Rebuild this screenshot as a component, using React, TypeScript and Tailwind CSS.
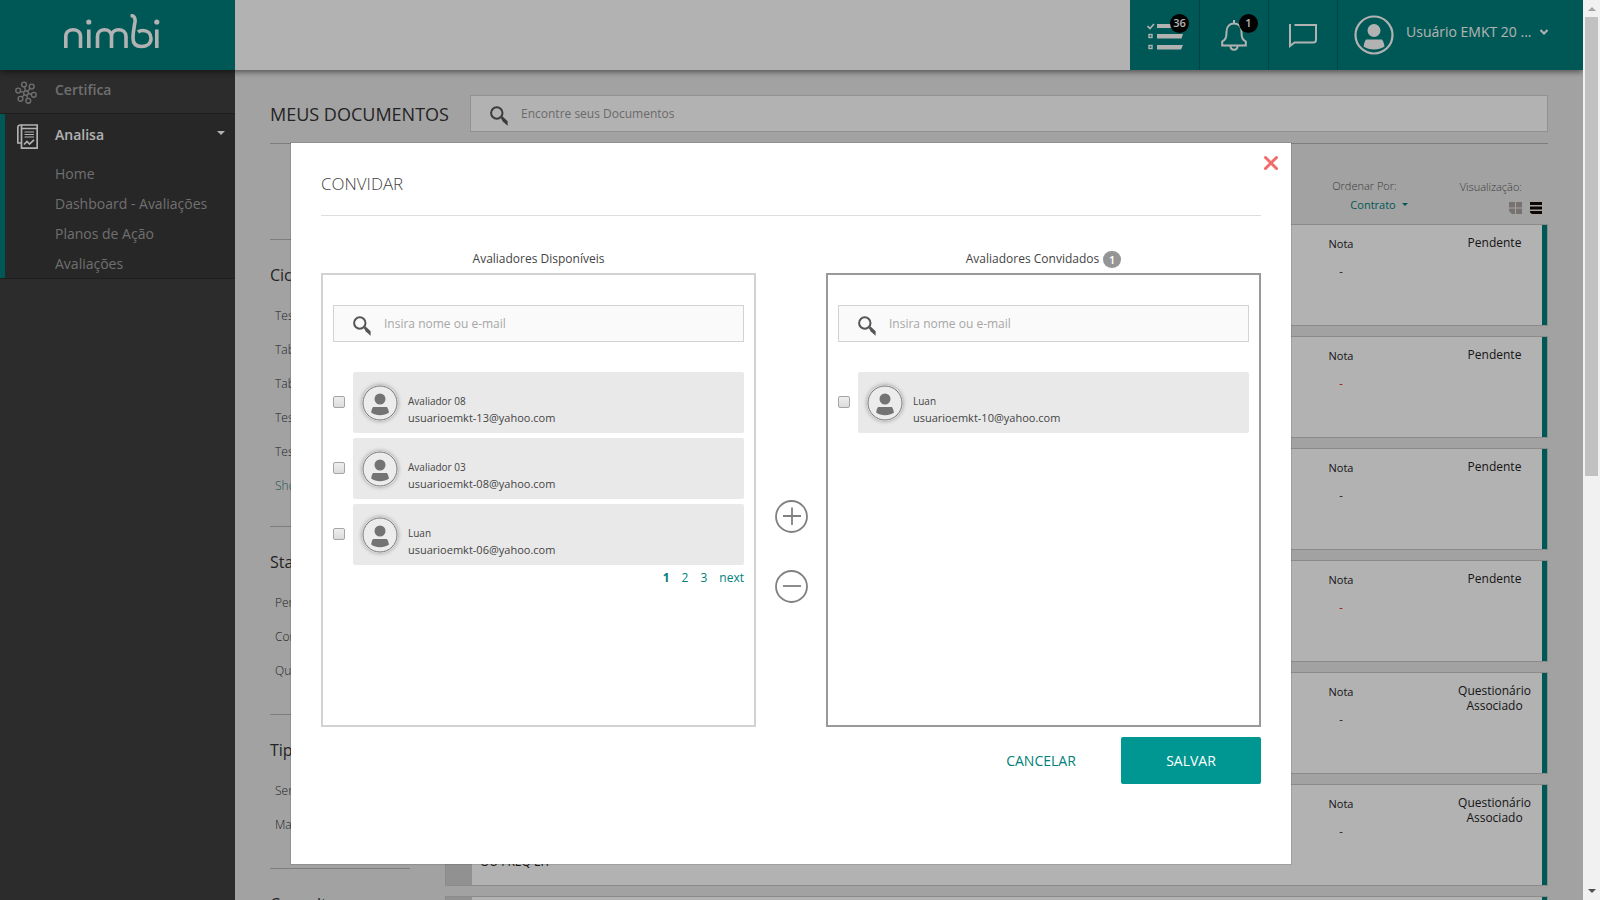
import React, { useState } from 'react';

interface Reviewer {
  id: string;
  name: string;
  email: string;
}

interface FilterGroup {
  title: string;
  items: string[];
  gap: string;
}

interface DocumentRow {
  id: number;
  status: string;
  late?: boolean;
  supplier?: string;
}

const subMenu = ['Home', 'Dashboard - Avaliações', 'Planos de Ação', 'Avaliações'];

const filters: FilterGroup[] = [
  { title: 'Ciclo', items: ['Teste', 'Tabela 1', 'Tabela 2', 'Teste 2', 'Teste 3', 'Show more'], gap: 'h-[287px]' },
  { title: 'Status', items: ['Pendente', 'Concluído', 'Questionário'], gap: 'h-[188px]' },
  { title: 'Tipo', items: ['Serviço', 'Material'], gap: 'h-[154px]' },
  { title: 'Consulta', items: [], gap: 'h-[90px]' },
];

const documents: DocumentRow[] = [
  { id: 1, status: 'Pendente' },
  { id: 2, status: 'Pendente', late: true },
  { id: 3, status: 'Pendente' },
  { id: 4, status: 'Pendente', late: true },
  { id: 5, status: 'Questionário Associado' },
  { id: 6, status: 'Questionário Associado', supplier: 'OU FREQ EIT' },
];

const available: Reviewer[] = [
  { id: 'a13', name: 'Avaliador 08', email: 'usuarioemkt-13@yahoo.com' },
  { id: 'a08', name: 'Avaliador 03', email: 'usuarioemkt-08@yahoo.com' },
  { id: 'a06', name: 'Luan', email: 'usuarioemkt-06@yahoo.com' },
];

const invited: Reviewer[] = [{ id: 'i10', name: 'Luan', email: 'usuarioemkt-10@yahoo.com' }];

const NimbiLogo = () => (
  <svg className="w-24 h-9" viewBox="0 0 96 36" fill="none" stroke="#fff" strokeWidth="3.6" role="img" aria-label="nimbi">
    <path d="M1.8 34V22.500C1.800 13.500 16.500 13.500 16.500 22.500V34" />
    <path d="M24.800 15.500V34M92.800 15.500V34" />
    <path d="M33.500 34V22.500C33.500 13.500 47.500 13.500 47.500 22.500V34M47.500 22.500C47.500 13.500 62 13.500 62 22.500V34" />
    <path d="M66.500 1.500C70 1.500 71.500 4 71 8C70 14 69 18 69 24C69 30 72.500 32.500 77.500 32.500C83 32.500 87 29.500 87 24.500C87 19.500 83.500 16.500 79 16.500C76.500 16.500 75 17.200 74 18" />
    <circle cx="24.800" cy="8" r="2.600" fill="#fff" stroke="none" />
    <circle cx="92.800" cy="8" r="2.600" fill="#fff" stroke="none" />
  </svg>
);

const MoleculeIcon = () => (
  <svg className="w-[22px] h-[23px]" viewBox="0 0 22 23" fill="none" stroke="currentColor" strokeWidth="1.4">
    <circle cx="11" cy="12" r="2.300" />
    <circle cx="9" cy="3.500" r="2.400" />
    <circle cx="16.700" cy="5.500" r="2.400" />
    <circle cx="3.200" cy="9.500" r="2.400" />
    <circle cx="18.800" cy="13.800" r="2.400" />
    <circle cx="5.500" cy="17.800" r="2.400" />
    <circle cx="13.300" cy="19.800" r="2.400" />
    <path d="M10.500 9.800L9.500 6M12.600 10.200L15.200 7.400M8.700 11.300L5.500 10.300M13.300 12.500L16.400 13.300M9.300 13.600L7.200 16M11.700 14.200L12.600 17.400" />
  </svg>
);

const ReportIcon = () => (
  <svg className="w-[21px] h-[25px]" viewBox="0 0 21 25" fill="none" stroke="currentColor" strokeWidth="1.7">
    <path d="M4.500 4.500V24.200H20.200V1H3C1.500 1 .8 2 .8 3.500V19H4.500M4.500 4.500H20M4.500 4.500V1" />
    <path d="M7.500 8H17M7.500 10.500H17M7.500 13H17" strokeWidth="1.200" />
    <path d="M7 20.500L10 17.500L12.500 20L17 15.800" />
  </svg>
);

const TasksIcon = () => (
  <svg className="w-9 h-7" viewBox="0 0 36 28" fill="none" stroke="#fff">
    <path d="M.5 3L3 5.500L7 1" strokeWidth="1.600" />
    <rect x="2" y="11.500" width="3" height="3" strokeWidth="1.400" />
    <rect x="2" y="22.500" width="3" height="3" strokeWidth="1.400" />
    <path fill="#fff" stroke="none" d="M10 1H36L34.800 5H10ZM10 11H36L34.500 15.500H10ZM10 22H36L34 26.500H10Z" />
  </svg>
);

const BellIcon = () => (
  <svg className="w-[26px] h-[31px]" viewBox="0 0 26 31" fill="none" stroke="#fff" strokeWidth="2">
    <path d="M13 0V3.500M13 3.500C8 3.500 5.500 7.500 5.500 12C5.500 18 4.500 19.500 1.200 21.500V25.500H24.800V21.500C21.500 19.500 20.500 18 20.500 12C20.500 7.500 18 3.500 13 3.500Z" />
    <path d="M9.500 26C9.500 31 16.500 31 16.500 26" />
  </svg>
);

const ChatIcon = () => (
  <svg className="w-7 h-6" viewBox="0 0 28 24" fill="none" stroke="#fff" strokeWidth="2">
    <path d="M1 0V22L5.500 18.500H24C26 18.500 27 17.500 27 16V1H5.500" />
  </svg>
);

const UserIcon = () => (
  <svg className="w-10 h-10" viewBox="0 0 40 40">
    <circle cx="20" cy="20" r="18.500" fill="none" stroke="#fff" strokeWidth="2.200" />
    <circle cx="20" cy="15.500" r="6.500" fill="#fff" />
    <path fill="#fff" d="M12 24.500H28C29.500 26.500 30.200 29 30.500 31.500C25 35.500 15 35.500 9.500 31.500C10 29 10.500 26.500 12 24.500Z" />
  </svg>
);

const SearchIcon = () => (
  <svg className="w-[18px] h-5 shrink-0" viewBox="0 0 18 20" fill="none" stroke="#555">
    <circle cx="6.800" cy="7" r="5.700" strokeWidth="2" />
    <path fill="#555" stroke="none" d="M10.800 12L12.600 10.600L17.600 15.200V19.800L12.800 15.600Z" />
  </svg>
);

const Avatar = () => (
  <svg className="w-9 h-9 shrink-0 rounded-full shadow-[0_0_4px_rgba(0,0,0,0.35)]" viewBox="0 0 36 36">
    <circle cx="18" cy="18" r="17" fill="#ececec" stroke="#777" strokeWidth="1" />
    <circle cx="18" cy="14" r="5.500" fill="#737373" />
    <path fill="#737373" d="M11 22H25C26 23.500 26.500 25.500 27 27.500C22 31 14 31 9.200 27.500C9.500 25.500 10 23.500 11 22Z" />
  </svg>
);

const SearchField = ({ label, id }: { label: string; id: string }) => (
  <label htmlFor={id} className="flex items-center h-[37px] pl-[19px] border border-[#d3d3d3] bg-[#fafafa]">
    <span className="pt-1"><SearchIcon /></span>
    <input id={id} type="text" placeholder={label} aria-label={label} className="flex-1 ml-[13px] min-w-0 h-full bg-transparent text-xs outline-none placeholder:text-[#a6a6a6]" />
  </label>
);

const ReviewerRow = ({ reviewer }: { reviewer: Reviewer }) => (
  <li className="flex items-center">
    <input
      id={reviewer.id}
      type="checkbox"
      className="appearance-none w-3 h-3 mr-2 mb-0.5 shrink-0 rounded-[2px] border border-[#a5a5a5] bg-linear-to-b from-[#eee] to-[#dcdcdc] checked:bg-[#009691]"
    />
    <label htmlFor={reviewer.id} className="flex flex-1 h-[61px] pl-[9px] pt-[13px] rounded-[2px] bg-[#e9e9e9] text-[#444]">
      <Avatar />
      <span className="flex flex-col ml-[10px] pt-2 text-[11px]">
        <span className="text-[10px] leading-4">{reviewer.name}</span>
        <span className="leading-[17px]">{reviewer.email}</span>
      </span>
    </label>
  </li>
);

const Sidebar = () => (
  <aside className="w-[235px] shrink-0 bg-[#3f3f3f] text-sm text-[#a0a0a0]">
    <a href="#certifica" className="flex items-center h-11 pl-[15px] pb-1 border-b border-[#2b2b2b] font-semibold">
      <span className="pt-1.5"><MoleculeIcon /></span>
      <span className="ml-[18px]">Certifica</span>
    </a>
    <div className="border-l-5 border-[#007f7b] bg-[#383838]">
      <button className="flex items-center w-full h-[42px] pl-3 pr-[10px] font-semibold text-white">
        <span className="pt-0.5"><ReportIcon /></span>
        <span className="ml-[17px]">Analisa</span>
        <span className="ml-auto mb-1 border-x-4 border-x-transparent border-t-4 border-t-white" />
      </button>
      <nav className="flex flex-col pt-0.5 pl-[50px]">
        {subMenu.map(item => (
          <a key={item} href="#menu" className="h-[30px] leading-8">{item}</a>
        ))}
      </nav>
    </div>
    <div className="border-t border-[#2b2b2b]" />
  </aside>
);

const Header = () => (
  <header className="relative z-10 flex h-[70px] shrink-0 bg-white text-white shadow-[0_2px_6px_rgba(0,0,0,0.5)]">
    <a href="#inicio" className="flex justify-center w-[235px] pt-[14px] pr-3 bg-[#007f7b]"><NimbiLogo /></a>
    <div className="flex ml-auto bg-[#007f7b]">
      <button aria-label="Tarefas" className="relative flex items-center justify-center w-[70px] pt-1 border-r border-[#00605e]">
        <TasksIcon />
        <span className="absolute top-[14px] right-2.5 flex items-center justify-center w-[19px] h-[19px] rounded-full bg-black text-[11px] font-semibold">36</span>
      </button>
      <button aria-label="Notificações" className="relative flex items-center justify-center w-[69px] pt-px border-r border-[#00605e]">
        <BellIcon />
        <span className="absolute top-[14px] right-2.5 flex items-center justify-center w-[19px] h-[19px] rounded-full bg-black text-[11px] font-semibold">1</span>
      </button>
      <button aria-label="Mensagens" className="flex items-center justify-center w-[69px] pt-0.5 border-r border-[#00605e]">
        <ChatIcon />
      </button>
      <button className="flex items-center w-[245px] pl-4 text-sm">
        <UserIcon />
        <span className="ml-3 pb-1.5">Usuário EMKT 20 ...</span>
        <svg className="w-2 h-2 ml-2 mb-1.5" viewBox="0 0 8 8" fill="none" stroke="#fff" strokeWidth="2"><path d="M.5 2L4 5.500L7.500 2" /></svg>
      </button>
    </div>
  </header>
);

const Filters = () => (
  <div className="w-[140px] shrink-0 pt-[95px]">
    {filters.map(group => (
      <section key={group.title} className={`border-t border-[#b4b4b4] pt-[23px] ${group.gap}`}>
        <h2 className="text-base leading-6 text-[#333]">{group.title}</h2>
        <ul className="pt-3 pl-[5px] text-xs font-light text-[#333]">
          {group.items.map(item => (
            <li key={item} className={`h-[34px] leading-[34px] ${item === 'Show more' ? 'text-[#2f7371]' : ''}`}>
              <a href="#filtro">{item}</a>
            </li>
          ))}
        </ul>
      </section>
    ))}
  </div>
);

const DocumentCard = ({ doc }: { doc: DocumentRow }) => (
  <li className="flex h-[102px] border border-[#c8c8c8] bg-white text-[#222]">
    <span className="w-[26px] bg-[#d0d0d0]" />
    <span className="flex-1 self-end pl-2 pb-[15px] text-xs leading-4">{doc.supplier}</span>
    <span className="flex flex-col items-center w-[60px] pt-[11px] text-[11px] leading-4">
      <span>Nota</span>
      <span className={`pt-[11px] ${doc.late ? 'text-[#e00000]' : ''}`}>-</span>
    </span>
    <span className="w-[171px] pl-[76px] text-center text-xs leading-[15px] pt-[10px]">{doc.status}</span>
    <span className="w-[5px] bg-[#007f7b]" />
  </li>
);

const DocumentList = () => (
  <div className="flex-1 ml-[35px] min-w-0">
    <div className="flex justify-end h-20 pt-[34px] text-[11px] text-[#777]">
      <div className="flex flex-col items-end w-20 mr-[52px]">
        <span className="mr-[11px] font-light text-[#555] whitespace-nowrap">Ordenar Por:</span>
        <button className="flex items-center gap-1.5 pt-0.5 text-[#007f7b]">
          Contrato
          <span className="border-x-3 border-x-transparent border-t-3 border-t-[#007f7b]" />
        </button>
      </div>
      <div className="flex flex-col items-end pt-px pr-1.5">
        <span className="mr-5 font-light text-[#555]">Visualização:</span>
        <span className="flex gap-2 mt-1.5">
          <button aria-label="Grade">
            <svg className="w-[13px] h-3" viewBox="0 0 13 12" fill="#aba39f"><path d="M0 0H6V5.500H0ZM7 0H13V5.500H7ZM0 6.500H6V12H3L0 9ZM7 6.500H13V12H7Z" /></svg>
          </button>
          <button aria-label="Lista">
            <svg className="w-3 h-3" viewBox="0 0 12 12" fill="#150a05"><path d="M0 0H12V3H0ZM0 4.500H12V7.500H0ZM0 9H12V12H2L0 10.500Z" /></svg>
          </button>
        </span>
      </div>
    </div>
    <ul className="flex flex-col gap-[10px]">
      {documents.map(doc => <DocumentCard key={doc.id} doc={doc} />)}
      <li className="flex justify-between h-[102px] border border-[#c8c8c8] bg-white">
        <span className="w-[26px] bg-[#d0d0d0]" />
        <span className="w-[5px] bg-[#007f7b]" />
      </li>
    </ul>
  </div>
);

const InviteModal = () => {
  const [page, setPage] = useState(1);

  return (
    <div role="dialog" aria-labelledby="invite-title" className="relative w-[1002px] mt-[142px] px-[30px] pb-20 border border-black/10 bg-white bg-clip-padding text-[#444]">
      <button aria-label="Fechar" className="absolute top-3 right-3 text-[#f26a6a]">
        <svg className="w-4 h-4" viewBox="0 0 16 16" stroke="currentColor" strokeWidth="3" strokeLinecap="round"><path d="M2.500 2.500L13.500 13.500M13.500 2.500L2.500 13.500" /></svg>
      </button>
      <h1 id="invite-title" className="h-[73px] pt-[29px] border-b border-[#ddd] text-[17px] leading-6 font-light">CONVIDAR</h1>
      <div className="flex pt-8">
        <section className="flex-1">
          <h2 className="h-[25px] leading-[22px] text-center text-xs">Avaliadores Disponíveis</h2>
          <div className="h-[454px] px-[10px] pt-[30px] border-2 border-[#d2d2d2]">
            <SearchField id="search-available" label="Insira nome ou e-mail" />
            <ul className="flex flex-col gap-[5px] pt-[30px]">
              {available.map(r => <ReviewerRow key={r.id} reviewer={r} />)}
            </ul>
            <nav className="flex justify-end gap-3 pt-[5px] text-xs text-[#007f7b]">
              {[1, 2, 3].map(n => (
                <button key={n} onClick={() => setPage(n)} className={n === page ? 'font-bold' : ''}>{n}</button>
              ))}
              <button onClick={() => setPage(Math.min(page + 1, 3))}>next</button>
            </nav>
          </div>
        </section>
        <div className="flex flex-col items-center gap-[37px] w-[70px] pt-[252px]">
          <button aria-label="Adicionar">
            <svg className="w-[33px] h-[33px]" viewBox="0 0 33 33" fill="none" stroke="#808080" strokeWidth="1.800"><circle cx="16.500" cy="16.500" r="15.500" /><path d="M8 16H26M17 7.500V25" /></svg>
          </button>
          <button aria-label="Remover">
            <svg className="w-[33px] h-[33px]" viewBox="0 0 33 33" fill="none" stroke="#808080" strokeWidth="1.800"><circle cx="16.500" cy="16.500" r="15.500" /><path d="M8 16H26" /></svg>
          </button>
        </div>
        <section className="flex-1">
          <h2 className="flex justify-center gap-1 h-[25px] leading-[22px] text-xs">
            Avaliadores Convidados
            <span className="w-[18px] h-[17px] mt-[3px] rounded-full bg-[#959595] text-center text-[11px] leading-[17px] font-semibold text-white">1</span>
          </h2>
          <div className="h-[454px] px-[10px] pt-[30px] border-2 border-[#999]">
            <SearchField id="search-invited" label="Insira nome ou e-mail" />
            <ul className="flex flex-col gap-[5px] pt-[30px]">
              {invited.map(r => <ReviewerRow key={r.id} reviewer={r} />)}
            </ul>
          </div>
        </section>
      </div>
      <div className="flex justify-end pt-[10px] text-sm">
        <button className="w-40 h-[47px] text-[#007f7b]">CANCELAR</button>
        <button className="w-[140px] h-[47px] rounded-[2px] bg-[#009691] font-medium text-white">SALVAR</button>
      </div>
    </div>
  );
};

const ScrollBar = () => (
  <div className="flex flex-col items-center w-[17px] shrink-0 bg-[#f1f1f1]">
    <span className="mt-[7px] border-x-4 border-x-transparent border-b-4 border-b-[#a3a3a3]" />
    <span className="w-[13px] h-[51%] mt-1.5 bg-[#c1c1c1]" />
    <span className="mt-auto mb-[7px] border-x-4 border-x-transparent border-t-4 border-t-[#505050]" />
  </div>
);

export default function App() {
  return (
    <div className="flex h-screen overflow-hidden font-['Open_Sans','Noto_Sans',sans-serif]">
      <div className="relative flex flex-col flex-1 min-w-0 overflow-hidden">
        <Header />
        <div className="flex flex-1 min-h-0">
          <Sidebar />
          <main className="flex-1 min-w-0 px-[35px] pt-[25px] bg-[#e9e9e9] overflow-hidden">
            <div className="flex items-center pb-[11px] border-b border-[#b4b4b4]">
              <h1 className="w-[200px] shrink-0 text-lg text-[#333]">MEUS DOCUMENTOS</h1>
              <label htmlFor="search-docs" className="flex flex-1 items-center h-[37px] pl-[19px] border border-[#d0d0d0] bg-white">
                <span className="pt-1"><SearchIcon /></span>
                <input id="search-docs" type="text" placeholder="Encontre seus Documentos" className="flex-1 ml-[13px] h-full bg-transparent text-xs outline-none placeholder:text-[#999]" />
              </label>
            </div>
            <div className="flex">
              <Filters />
              <DocumentList />
            </div>
          </main>
        </div>
        <div className="absolute inset-0 z-20 flex items-start justify-center pr-px bg-black/30">
          <InviteModal />
        </div>
      </div>
      <ScrollBar />
    </div>
  );
}
